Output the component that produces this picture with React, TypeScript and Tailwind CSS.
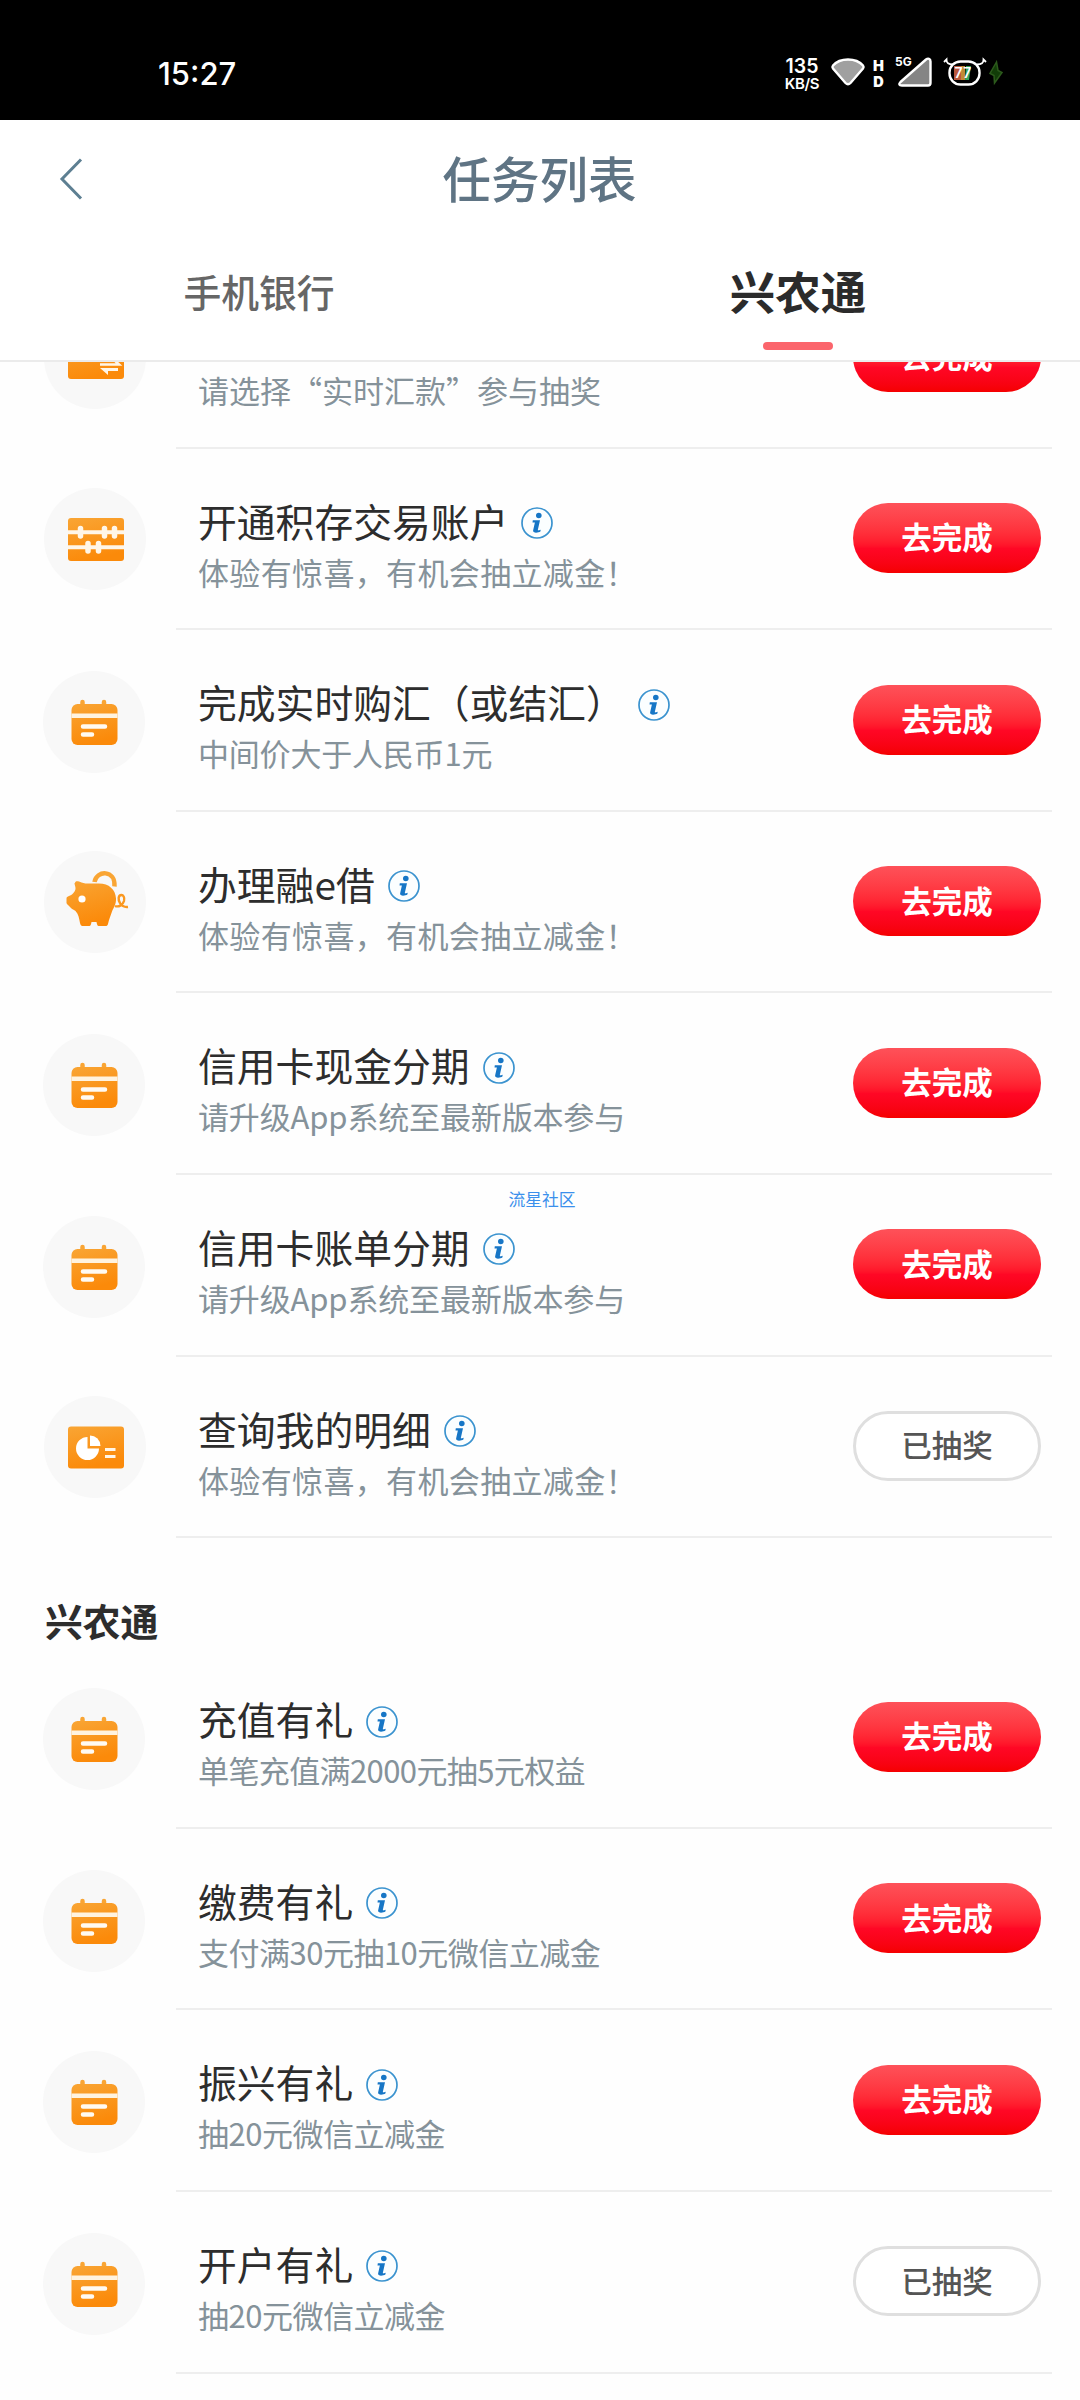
import clsx from 'clsx'

type IconName = 'transfer' | 'abacus' | 'calendar' | 'piggy' | 'report'

interface Task {
  icon: IconName
  title: string
  desc: string
  done?: boolean
  descClass?: string
}

const bankTasks: Task[] = [
  { icon: 'transfer', title: '', desc: '请选择“实时汇款”参与抽奖' },
  { icon: 'abacus', title: '开通积存交易账户', desc: '体验有惊喜，有机会抽立减金！', descClass: 'tracking-[0.35px]' },
  { icon: 'calendar', title: '完成实时购汇（或结汇）', desc: '中间价大于人民币1元', descClass: 'tracking-[-0.2px]' },
  { icon: 'piggy', title: '办理融e借', desc: '体验有惊喜，有机会抽立减金！', descClass: 'tracking-[0.35px]' },
  { icon: 'calendar', title: '信用卡现金分期', desc: '请升级App系统至最新版本参与', descClass: 'tracking-[-0.15px]' },
  { icon: 'calendar', title: '信用卡账单分期', desc: '请升级App系统至最新版本参与', descClass: 'tracking-[-0.15px]' },
  { icon: 'report', title: '查询我的明细', desc: '体验有惊喜，有机会抽立减金！', done: true, descClass: 'tracking-[0.35px]' },
]

const ruralTasks: Task[] = [
  { icon: 'calendar', title: '充值有礼', desc: '单笔充值满2000元抽5元权益', descClass: 'tracking-[-0.6px]' },
  { icon: 'calendar', title: '缴费有礼', desc: '支付满30元抽10元微信立减金', descClass: 'tracking-[-0.5px]' },
  { icon: 'calendar', title: '振兴有礼', desc: '抽20元微信立减金', descClass: 'tracking-[-0.5px]' },
  { icon: 'calendar', title: '开户有礼', desc: '抽20元微信立减金', done: true, descClass: 'tracking-[-0.5px]' },
]

function Gradients() {
  return (
    <svg className="absolute h-0 w-0">
      <defs>
        <linearGradient id="orange" x1="0" y1="0" x2="0.3" y2="1">
          <stop offset="0" stopColor="#f9a534" />
          <stop offset="1" stopColor="#fb8a0a" />
        </linearGradient>
      </defs>
    </svg>
  )
}

function TaskIcon({ name }: { name: IconName }) {
  return (
    <svg viewBox="0 0 102 102" className="h-[102px] w-[102px]">
      {name === 'transfer' && (
        <>
          <rect x="24" y="28" width="56" height="44" rx="3" fill="url(#orange)" />
          <path d="M68 51l7 6.500H56" stroke="#fff6e8" strokeWidth="2.600" fill="none" />
          <path d="M56 61h18v3H64v4z" fill="#fff6e8" />
        </>
      )}
      {name === 'abacus' && (
        <>
          <rect x="24" y="30" width="56" height="43" rx="3" fill="url(#orange)" />
          <path d="M24 44.3h56M24 59.3h56" stroke="#fff6e8" strokeWidth="4" />
          <path
            d="M36.5 40.5v7.5M60.5 40.5v7.5M70.5 40.5v7.5M44 55.500v7.5M54.500 55.500v7.5"
            stroke="#fff6e8"
            strokeWidth="5.500"
            strokeLinecap="round"
          />
        </>
      )}
      {name === 'calendar' && (
        <>
          <path d="M39.500 31v5M61 31v5" stroke="#f9a534" strokeWidth="4.500" strokeLinecap="round" />
          <rect x="28.500" y="33" width="46" height="41" rx="6" fill="url(#orange)" />
          <rect x="28.500" y="42.500" width="46" height="4.500" fill="#fff3df" />
          <path d="M40 55.500h22M40 63.500h9" stroke="#fffaf2" strokeWidth="4.500" strokeLinecap="round" />
        </>
      )}
      {name === 'piggy' && (
        <>
          <path d="M50.500 31c2-12 21-12.500 20 4.500" stroke="#f9a534" strokeWidth="4.500" fill="none" />
          <path
            d="M31 32c0-2 2-2 4-1.500 4 1.500 5 2 9 2h11c10 0 16.500 6 17 15 .3 6-2.500 9-4 13-1.500 4.500-3 8-4 12.500-.5 1.500-1 2-2.500 2h-7c-1 0-1.500-1.500-2-4h-5c-.5 2.500-1 4-2 4h-7c-1.500 0-2-1-2.500-3-1-5-1.500-9-4.500-12-2-1.500-4-2-5.500-4-1.500-2-3.500-3-3.500-4v-4.500c0-1.500 1-2 2.500-2.500 3-1 6-4 6.500-7 .2-2.500-1-4-1-6z"
            fill="url(#orange)"
          />
          <circle cx="38" cy="48" r="3.600" fill="#fff" />
          <path
            d="M71 55c4 1.500 8-1.500 9-5 1-4-1-6-2.500-6-3.500 0-3.500 5-1.500 8 1.500 2.500 3.500 4.500 8 4"
            stroke="#fa9820"
            strokeWidth="2.400"
            fill="none"
          />
        </>
      )}
      {name === 'report' && (
        <>
          <rect x="24" y="30.500" width="56" height="42" rx="3" fill="url(#orange)" />
          <path d="M43.500 41a11.500 11.500 0 1 0 11.500 11.500H43.500z" fill="#fff" />
          <path d="M46 39.500a10.500 10.500 0 0 1 10.500 10.500H46z" fill="#fff" />
          <path d="M61 53.500h10.500M61 60.500h10.500" stroke="#fff6e8" strokeWidth="3.200" />
        </>
      )}
    </svg>
  )
}

function InfoIcon() {
  return (
    <svg viewBox="0 0 32 32" className="mt-[7px] ml-[13px] h-8 w-8 shrink-0">
      <circle cx="16" cy="16" r="15" fill="#fbfeff" stroke="#3b93cf" strokeWidth="1.700" />
      <circle cx="17.800" cy="8.500" r="2.800" fill="#1676c6" />
      <path d="M11.800 13.300h7.200L16.800 23c0 .6.600.5 2.900-.2l-.3 1.800c-2 1.200-7.700 1.900-7.300-1l1.800-8.100H11.500z" fill="#1676c6" />
    </svg>
  )
}

function TaskRow({ task }: { task: Task }) {
  return (
    <div className="flex h-[181.6px]">
      <div
        className={clsx(
          'h-[102px] w-[102px] shrink-0 rounded-full bg-[#f8f8f8]',
          task.icon === 'calendar' ? 'mt-[41px] ml-[43px]' : 'mt-[39.500px] ml-[44px]'
        )}
      >
        <TaskIcon name={task.icon} />
      </div>
      <div
        className={clsx(
          'mr-7 flex flex-1 border-b-2 border-[#eeeeee] pl-[22px]',
          task.icon === 'calendar' ? 'ml-[31px]' : 'ml-[30px]'
        )}
      >
        <div className="flex-1 whitespace-nowrap">
          <div className="mt-[45px] flex h-[52px] items-center text-[38.800px] leading-[52px] text-[#2d2d2d]">
            {task.title}
            {task.title && <InfoIcon />}
          </div>
          <p className={clsx('mt-[5px] text-[31px] leading-[42px] text-[#85929a]', task.descClass)}>
            {task.desc}
          </p>
        </div>
        <button
          type="button"
          className={clsx(
            'mt-[54.500px] mr-[11px] h-[70px] w-[188px] rounded-full pb-[3px] text-[30.500px] leading-none',
            task.done
              ? 'border-3 border-[#dfdfdf] bg-white font-medium text-[#555555]'
              : 'bg-linear-to-b from-[#fe5159] via-[#ff0725] via-65% to-[#f50000] font-bold text-white'
          )}
        >
          {task.done ? '已抽奖' : '去完成'}
        </button>
      </div>
    </div>
  )
}

function StatusBar() {
  return (
    <div className="flex h-[120px] justify-between bg-black pr-[76px] pl-[158px] font-['Inter','Noto_Sans_CJK_SC',sans-serif] text-white">
      <span className="mt-[53.500px] text-[31px] leading-10 font-medium">15:27</span>
      <div className="flex pt-[56px]">
        <div className="w-[36px] text-center font-semibold">
          <div className="text-[19.500px] leading-[20px]">135</div>
          <div className="text-[15px] leading-[15px] tracking-[-0.3px]">KB/S</div>
        </div>
        <svg viewBox="0 0 36 32" className="ml-[10px] h-8 w-9">
          <path d="M3 9.500C10 1.500 26 1.500 33 9.500c.8 1 .7 2 0 3L20.500 27c-1.500 1.500-3.500 1.500-5 0L3 12.500c-.7-1-.8-2 0-3z" fill="#a0a0a0" stroke="#fff" strokeWidth="2.400" />
        </svg>
        <div className="ml-[6px] w-[13px] text-center text-[14.500px] leading-[16px] font-black">
          <div className="mt-[2px]">H</div>
          <div>D</div>
        </div>
        <div className="relative ml-[10px]">
          <span className="absolute top-0 left-0 text-[12px] leading-3 font-bold">5G</span>
          <svg viewBox="0 0 40 34" className="h-[34px] w-10">
            <path d="M5.500 26L31 3.500c2-1.500 4.500-1 4.500 2V27c0 2-1 2.500-2.500 2.500H7c-3 0-3.500-1.500-1.500-3.500z" fill="#858585" stroke="#fff" strokeWidth="2.400" />
          </svg>
        </div>
        <svg viewBox="0 0 44 32" className="ml-[8px] h-8 w-11">
          <rect x="6.500" y="5.500" width="30" height="23" rx="11" fill="#000" stroke="#fff" strokeWidth="2.400" />
          <path d="M10 8.500c-5 0-6.500-1.500-6.500-5L1 6M34 8.500c5 0 6.500-1.500 6.500-5L43 6" stroke="#fff" strokeWidth="1.800" fill="none" />
          <path d="M11 10h7v14h-7z" fill="#b9583c" />
          <path d="M18 10h4v14h-4z" fill="#c08a35" />
          <path d="M23 10h5l-2 14h-4z" fill="#32a35c" />
          <text x="11.500" y="22" fill="#fff" fontSize="14" fontWeight="600" letterSpacing="0.500">77</text>
        </svg>
        <svg viewBox="0 0 16 26" className="mt-[4px] ml-px h-[26px] w-4">
          <path d="M8.500 2L2 13.500l4 2L6.500 23 14 12.500l-4-2z" fill="#123d08" stroke="#2c5a1c" strokeWidth="1.500" />
        </svg>
      </div>
    </div>
  )
}

export default function App() {
  return (
    <div
      lang="zh-CN"
      className="relative h-[2400px] w-[1080px] overflow-hidden bg-[#fefefe] font-['Noto_Sans_CJK_SC',sans-serif]"
    >
      <Gradients />
      <StatusBar />

      <header className="h-[242px] border-b-2 border-[#ebebeb] bg-white">
        <div className="flex h-[116px] items-center">
          <svg viewBox="0 0 24 44" className="mt-[2px] ml-[59px] h-11 w-6">
            <path d="M22 2.500L3 22l19 19.500" stroke="#5d7f92" strokeWidth="3" fill="none" />
          </svg>
          <h1 className="mr-[84px] flex-1 pb-[3px] text-center text-[48.500px] leading-[60px] font-medium text-[#5f7484]">任务列表</h1>
        </div>
        <div className="flex h-[124px]">
          <div className="ml-[89px] flex h-[110px] w-[340px] items-center justify-center text-[37.800px] font-medium text-[#666666]">
            手机银行
          </div>
          <div className="ml-[199px] flex w-[340px] flex-col items-center">
            <div className="flex h-[106px] items-center pt-[3px] text-[45.500px] font-bold text-[#2b2b2b]">兴农通</div>
            <div className="h-2 w-[70px] rounded-full bg-[#fb656c]" />
          </div>
        </div>
      </header>

      <main className="h-[2038px] overflow-hidden">
        <div className="-mt-[95px]">
          {bankTasks.map((task, i) => (
            <TaskRow key={i} task={task} />
          ))}
          <h2 className="h-[109px] pt-[56px] pl-[45px] text-[37.800px] leading-[52px] font-bold text-[#2d2d2d]">兴农通</h2>
          {ruralTasks.map((task, i) => (
            <TaskRow key={i} task={task} />
          ))}
        </div>
      </main>

      <span className="absolute top-[1187px] left-[508.500px] text-[16.800px] leading-6 text-[#3b90ec]">流星社区</span>
    </div>
  )
}
